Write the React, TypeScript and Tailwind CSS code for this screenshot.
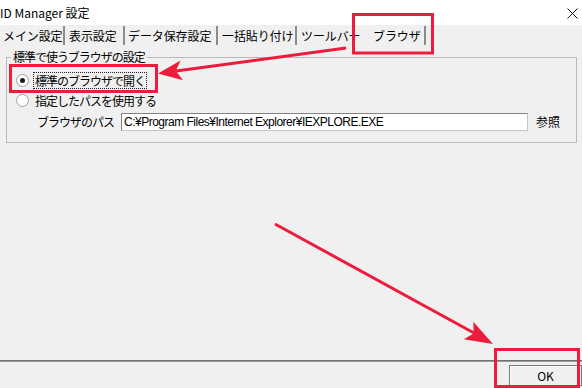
import React from "react";

const font = { fontFamily: '"Noto Sans CJK JP", "Noto Sans", sans-serif' };

const tabs = [
  { label: "メイン設定", cls: "w-[65px] pl-[3px] border-r-2" },
  { label: "表示設定", cls: "w-[60px] pl-[4px] border-r-2" },
  { label: "データ保存設定", cls: "w-[93px] pl-[3px] border-r-2" },
  { label: "一括貼り付け", cls: "w-[79px] pl-[4px] border-r-2" },
  { label: "ツールバー", cls: "w-[69px] pl-[4px]" },
  { label: "ブラウザ", cls: "w-[60px] pl-[7px] border-r-2" },
];

function Radio({ checked }: { checked?: boolean }) {
  return (
    <span className="flex h-[13px] w-[13px] items-center justify-center rounded-full border border-[#a0a0a0] bg-white">
      {checked && <span className="h-[5px] w-[5px] rounded-full bg-[#1a1a1a]" />}
    </span>
  );
}

export default function App() {
  return (
    <div className="relative flex h-[388px] w-[582px] flex-col overflow-hidden bg-[#f0f0f0] text-[#000]" style={font}>
      {/* title bar */}
      <div className="flex h-[25px] items-center justify-between bg-white">
        <span className="text-[12px] leading-none">ID Manager 設定</span>
        <svg width="11" height="11" viewBox="0 0 11 11" className="mr-[4px] mt-[1px]">
          <path d="M0.5 0.5 L10.5 10.5 M10.5 0.5 L0.5 10.5" stroke="#111" strokeWidth="1" />
        </svg>
      </div>

      {/* tabs */}
      <div className="mt-[1px] flex h-[19px] items-stretch">
        {tabs.map((t) => (
          <div key={t.label} className={`flex items-center border-[#8c8c8c] text-[12px] leading-none tracking-[-0.1px] ${t.cls}`}>
            {t.label}
          </div>
        ))}
      </div>

      {/* group box */}
      <div className="relative ml-[6px] mt-[12px] h-[86px] w-[571px] border border-[#b9b9b9] pl-[9px] pt-[12px]">
        <span className="absolute -top-[8px] left-[4px] bg-[#f0f0f0] px-[2px] text-[12px] leading-[14px] tracking-[-1px]">
          標準で使うブラウザの設定
        </span>
        <div className="flex h-[20px] items-center">
          <Radio checked />
          <span className="ml-[4px] border border-dotted border-[#222] px-[1px] text-[12px] leading-[15px] tracking-[-1px]">
            標準のブラウザで開く
          </span>
        </div>
        <div className="flex h-[20px] items-center">
          <Radio />
          <span className="ml-[6px] text-[12px] leading-[15px] tracking-[-1px]">指定したパスを使用する</span>
        </div>
        <div className="mt-[3px] flex h-[18px] items-center">
          <span className="ml-[21px] w-[84px] text-[12px] leading-none tracking-[-1px]">ブラウザのパス</span>
          <div
            className="flex h-[18px] w-[407px] items-center border border-[#c4c4c4] border-l-[#828282] border-t-[#828282] bg-white pl-[2px] text-[12px] leading-none tracking-[-0.5px]"
            style={{ fontFamily: '"Liberation Sans", "Noto Sans CJK JP", sans-serif' }}
          >
            C:¥Program Files¥Internet Explorer¥IEXPLORE.EXE
          </div>
          <span className="ml-[8px] text-[12px] leading-none">参照</span>
        </div>
      </div>

      <div className="flex-1" />

      {/* footer */}
      <div className="h-[2px] border-t border-[#6f6f6f] bg-[#9a9a9a]" />
      <div className="flex h-[26px] justify-end pt-[3px]">
        <div className="flex h-[21px] w-[73px] items-center justify-center border border-[#7a7a7a] text-[12px] leading-none shadow-[inset_1px_1px_0_#ffffff]">
          OK
        </div>
      </div>

      {/* annotations */}
      <svg className="pointer-events-none absolute left-0 top-0" width="582" height="388" viewBox="0 0 582 388">
        <g stroke="#ee1c3c" fill="none" strokeWidth="3">
          <rect x="353.5" y="14.5" width="79" height="38.5" />
          <rect x="10.5" y="65.5" width="146" height="26" />
          <rect x="495.5" y="349.5" width="83" height="37" />
          <line x1="346" y1="48" x2="176" y2="71" />
          <line x1="275" y1="224" x2="474" y2="333" />
        </g>
        <g fill="#ee1c3c">
          <polygon points="158,73.5 180.5,60.4 175.8,71.1 183.1,80.2" />
          <polygon points="493,344 473.3,321.7 473.7,333.4 463.7,339.3" />
        </g>
      </svg>
    </div>
  );
}
